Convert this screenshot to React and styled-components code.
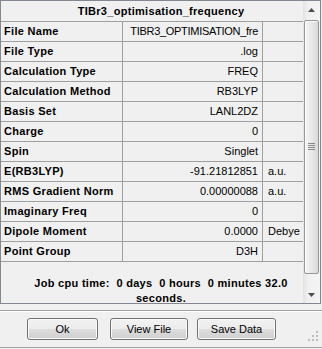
import React from 'react'
import styled, { createGlobalStyle } from 'styled-components'

const GlobalStyle = createGlobalStyle`
  html, body {
    margin: 0;
    padding: 0;
    background: #f0f0f0;
  }
  body {
    font-family: 'Liberation Sans', Arial, sans-serif;
    font-size: 11px;
    color: #000;
  }
`

const rows = [
  { label: 'File Name', value: 'TIBR3_OPTIMISATION_fre', unit: '', tight: true },
  { label: 'File Type', value: '.log', unit: '' },
  { label: 'Calculation Type', value: 'FREQ', unit: '' },
  { label: 'Calculation Method', value: 'RB3LYP', unit: '' },
  { label: 'Basis Set', value: 'LANL2DZ', unit: '' },
  { label: 'Charge', value: '0', unit: '' },
  { label: 'Spin', value: 'Singlet', unit: '' },
  { label: 'E(RB3LYP)', value: '-91.21812851', unit: 'a.u.' },
  { label: 'RMS Gradient Norm', value: '0.00000088', unit: 'a.u.' },
  { label: 'Imaginary Freq', value: '0', unit: '' },
  { label: 'Dipole Moment', value: '0.0000', unit: 'Debye' },
  { label: 'Point Group', value: 'D3H', unit: '' },
]

const Dialog = styled.div`
  width: 322px;
  height: 349px;
  display: flex;
  flex-direction: column;
  overflow: hidden;
`

const ListFrame = styled.div`
  width: 321px;
  height: 304px;
  box-sizing: border-box;
  border: 1px solid #828790;
  display: flex;
`

const Content = styled.div`
  width: 302px;
  display: flex;
  flex-direction: column;
  overflow: hidden;
`

const TitleRow = styled.div`
  height: 20px;
  line-height: 20px;
  border-bottom: 1px solid #a0a0a0;
  padding-left: 18px;
  text-align: center;
  font-weight: bold;
  letter-spacing: 0.3px;
  white-space: nowrap;
`

const Row = styled.div`
  display: grid;
  grid-template-columns: 121px 139px 40px;
  column-gap: 1px;
  background: #a0a0a0;
  border-bottom: 1px solid #a0a0a0;
`

const Cell = styled.div`
  height: 19px;
  line-height: 19px;
  background: #f0f0f0;
  white-space: nowrap;
  overflow: hidden;
  text-align: ${p => p.$align || 'left'};
  padding: ${p => p.$pad};
  font-weight: ${p => (p.$bold ? 'bold' : 'normal')};
  letter-spacing: ${p => (p.$bold ? '0.3px' : p.$tight ? '-0.3px' : '0')};
`

const JobTime = styled.div`
  flex: 1;
  padding: 14px 0 0 18px;
  line-height: 15px;
  text-align: center;
  font-weight: bold;
  letter-spacing: 0.3px;
  white-space: pre;
  overflow: hidden;
`

const ScrollBar = styled.div`
  width: 17px;
  display: flex;
  flex-direction: column;
  background: linear-gradient(to right, #e3e3e3, #f0f0f0 30%, #f4f4f4);
`

const Arrow = styled.div`
  height: 17px;
  display: flex;
  align-items: center;
  justify-content: center;
`

const Track = styled.div`
  flex: 1;
  padding: 2px 0 12px 0;
  display: flex;
`

const Thumb = styled.div`
  flex: 1;
  margin: 0 1px;
  border: 1px solid #979797;
  border-radius: 2px;
  background: linear-gradient(to right, #f5f5f5, #e8e8e8 50%, #d8d8d8);
  box-shadow: inset 1px 1px 0 #fdfdfd;
  display: flex;
  align-items: center;
  justify-content: center;
`

const ButtonPanel = styled.div`
  margin-top: 6px;
  height: 38px;
  border-top: 1px solid #a0a0a0;
  border-bottom: 1px solid #a0a0a0;
  box-shadow: inset 0 1px 0 #ffffff;
  display: flex;
  align-items: flex-start;
  padding: 7px 0 0 27px;
  box-sizing: border-box;
  position: relative;
`

const Button = styled.button`
  width: ${p => p.$w}px;
  height: 22px;
  margin-right: ${p => p.$gap}px;
  padding: 0;
  border: 1px solid #707070;
  border-radius: 3px;
  background: linear-gradient(to bottom, #f2f2f2 0%, #ebebeb 50%, #dddddd 51%, #cfcfcf 100%);
  box-shadow: inset 0 0 0 1px #fbfbfb;
  font-family: 'Liberation Sans', Arial, sans-serif;
  font-size: 11px;
  color: #000;
`

const Grip = styled.svg`
  position: absolute;
  right: 3px;
  bottom: 5px;
`

const UpArrow = () => (
  <svg width="7" height="4" viewBox="0 0 7 4">
    <path d="M3.5 0 L7 4 L0 4 Z" fill="#4d4d4d" />
  </svg>
)

const DownArrow = () => (
  <svg width="7" height="4" viewBox="0 0 7 4">
    <path d="M0 0 L7 0 L3.5 4 Z" fill="#4d4d4d" />
  </svg>
)

const GripLines = () => (
  <svg width="7" height="8" viewBox="0 0 7 8">
    {[0, 2, 4, 6].map(y => (
      <rect key={y} x="0" y={y} width="7" height="1" fill="#8a8a8a" />
    ))}
  </svg>
)

export default function App() {
  return (
    <>
      <GlobalStyle />
      <Dialog>
        <ListFrame>
          <Content>
            <TitleRow>TIBr3_optimisation_frequency</TitleRow>
            {rows.map(r => (
              <Row key={r.label}>
                <Cell $bold $pad="0 0 0 3px">{r.label}</Cell>
                <Cell $align="right" $tight={r.tight} $pad="0 4px 0 5px">{r.value}</Cell>
                <Cell $pad="0 0 0 5px">{r.unit}</Cell>
              </Row>
            ))}
            <JobTime>
              {'Job cpu time:  0 days  0 hours  0 minutes 32.0\nseconds.'}
            </JobTime>
          </Content>
          <ScrollBar>
            <Arrow><UpArrow /></Arrow>
            <Track>
              <Thumb><GripLines /></Thumb>
            </Track>
            <Arrow><DownArrow /></Arrow>
          </ScrollBar>
        </ListFrame>
        <ButtonPanel>
          <Button $w={71} $gap={12}>Ok</Button>
          <Button $w={78} $gap={9}>View File</Button>
          <Button $w={79} $gap={0}>Save Data</Button>
          <Grip width="12" height="12" viewBox="0 0 12 12">
            {[[9, 1], [9, 5], [5, 5], [9, 9], [5, 9], [1, 9]].map(([x, y]) => (
              <rect key={`${x}-${y}`} x={x} y={y} width="2" height="2" fill="#bcbcbc" />
            ))}
          </Grip>
        </ButtonPanel>
      </Dialog>
    </>
  )
}
